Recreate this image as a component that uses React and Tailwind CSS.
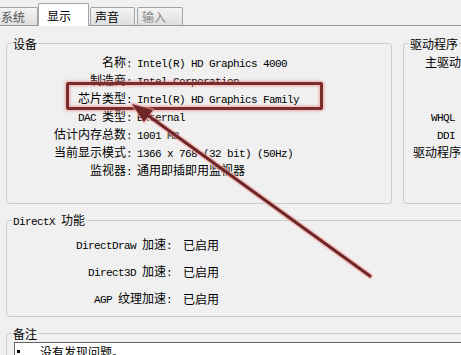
import React from "react";

const lat = "font-['Liberation_Mono',monospace] text-[11px] tracking-[-0.6px]";
const cjk = "font-['Noto_Sans_CJK_SC',sans-serif] text-[12px]";

// split a label into latin / CJK runs so each gets its own font
const Mix = ({ text }) => {
  const parts = text.match(/[\x00-\xff]+|[^\x00-\xff]+/g) || [];
  return parts.map((p, i) => (
    <span key={i} className={/[\x00-\xff]/.test(p[0]) ? lat : cjk}>
      {p}
    </span>
  ));
};

const device = [
  ["名称:", "Intel(R) HD Graphics 4000"],
  ["制造商:", "Intel Corporation"],
  ["芯片类型:", "Intel(R) HD Graphics Family"],
  ["DAC 类型:", "External"],
  ["估计内存总数:", "1001 MB"],
  ["当前显示模式:", "1366 x 768 (32 bit) (50Hz)"],
  ["监视器:", "通用即插即用监视器"],
];

const driver = ["主驱动程序:", "", "", "WHQL 徽标:", "DDI 版本:", "驱动程序模型:", ""];

const directx = [
  ["DirectDraw 加速:", "已启用"],
  ["Direct3D 加速:", "已启用"],
  ["AGP 纹理加速:", "已启用"],
];

const Tab = ({ label, className }) => (
  <div
    className={
      "flex items-center border border-b-0 border-[#a3a3a3] rounded-t-[2px] leading-[14px] " +
      className
    }
  >
    <Mix text={label} />
  </div>
);

const App = () => {
  return (
    <div className="relative w-[461px] h-[355px] overflow-hidden bg-[#f0f0f0] text-black">
      {/* tabs */}
      <div className="flex items-end h-[26px] border-b border-[#9a9a9a]">
        <Tab
          label="系统"
          className="ml-[-6px] w-[44px] h-[18px] pl-[6px] pt-[1px] bg-linear-to-b from-[#f4f4f4] to-[#dedede] text-[#555]"
        />
        <Tab
          label="显示"
          className="relative z-10 w-[51px] h-[23px] mb-[-1px] pl-[8px] pt-[1px] bg-white border-[#8e8e8e]"
        />
        <Tab
          label="声音"
          className="ml-[1px] w-[45px] h-[18px] pl-[4px] pt-[1px] bg-linear-to-b from-[#f4f4f4] to-[#dedede]"
        />
        <Tab
          label="输入"
          className="ml-[2px] w-[46px] h-[18px] pl-[4px] pt-[1px] bg-linear-to-b from-[#f4f4f4] to-[#dedede] text-[#8a8a8a]"
        />
      </div>

      {/* device + driver */}
      <div className="flex gap-[11px] pl-[6px] pt-[10px]">
        <fieldset className="w-[386px] h-[168px] shrink-0 border border-[#cdcdcd] rounded-[3px]">
          <legend className="ml-[5px] px-[1px] leading-[14px]">
            <Mix text="设备" />
          </legend>
          <div className="pt-[1px]">
            {device.map(([k, v]) => (
              <div key={k} className="flex h-[18px] leading-[18px] whitespace-pre">
                <div className="w-[125px] text-right">
                  <Mix text={k} />
                </div>
                <div className="pl-[5px]">
                  <Mix text={v} />
                </div>
              </div>
            ))}
          </div>
        </fieldset>

        <fieldset className="w-[130px] min-w-0 h-[168px] shrink-0 border border-[#cdcdcd] rounded-[3px]">
          <legend className="ml-[5px] px-[1px] leading-[14px]">
            <Mix text="驱动程序" />
          </legend>
          <div className="pt-[1px]">
            {driver.map((k, i) => (
              <div key={i} className="h-[18px] leading-[18px] whitespace-pre">
                <div className="w-[87px] text-right">
                  <Mix text={k} />
                </div>
              </div>
            ))}
          </div>
        </fieldset>
      </div>

      {/* directx */}
      <fieldset className="ml-[6px] mt-[8px] w-[470px] h-[105px] border border-[#cdcdcd] rounded-[3px]">
        <legend className="ml-[5px] px-[1px] leading-[14px] whitespace-pre">
          <Mix text="DirectX 功能" />
        </legend>
        <div className="pt-[2px]">
          {directx.map(([k, v]) => (
            <div key={k} className="flex items-center h-[27px] leading-[14px] whitespace-pre">
              <div className="w-[165px] text-right">
                <Mix text={k} />
              </div>
              <div className="pl-[11px]">
                <Mix text={v} />
              </div>
            </div>
          ))}
        </div>
      </fieldset>

      {/* notes */}
      <fieldset className="ml-[6px] mt-[9px] w-[470px] h-[60px] border border-[#cdcdcd] rounded-[3px]">
        <legend className="ml-[5px] px-[1px] leading-[14px]">
          <Mix text="备注" />
        </legend>
        <div className="ml-[7px] mt-[1px] h-[40px] bg-white border-l border-t border-[#646464]">
          <div className="flex pt-[1px] leading-[14px]">
            <div className="ml-[2px] mt-[6px] w-[3px] h-[3px] bg-black" />
            <div className="ml-[20px]">
              <Mix text="没有发现问题。" />
            </div>
          </div>
        </div>
      </fieldset>

      {/* annotation: red box */}
      <div className="absolute left-[66px] top-[82px] w-[257px] h-[28px] border-[3px] border-[#7a2d2d] rounded-[2px] shadow-[0_0_3px_1px_rgba(240,140,140,0.7),inset_0_0_3px_1px_rgba(240,140,140,0.7)]" />

      {/* annotation: arrow */}
      <svg className="absolute inset-0 pointer-events-none" width="461" height="355" viewBox="0 0 461 355">
        <line x1="370" y1="276" x2="146" y2="114" stroke="#f3a3a3" strokeOpacity="0.6" strokeWidth="6" strokeLinecap="round" />
        <polygon points="132,104 153,110 144,122" fill="#f3a3a3" fillOpacity="0.6" stroke="#f3a3a3" strokeOpacity="0.6" strokeWidth="3" strokeLinejoin="round" />
        <line x1="370" y1="276" x2="146" y2="114" stroke="#6e2626" strokeWidth="3" strokeLinecap="round" />
        <polygon points="132,104 153,110 144,122" fill="#6e2626" />
      </svg>
    </div>
  );
};

export default App;
